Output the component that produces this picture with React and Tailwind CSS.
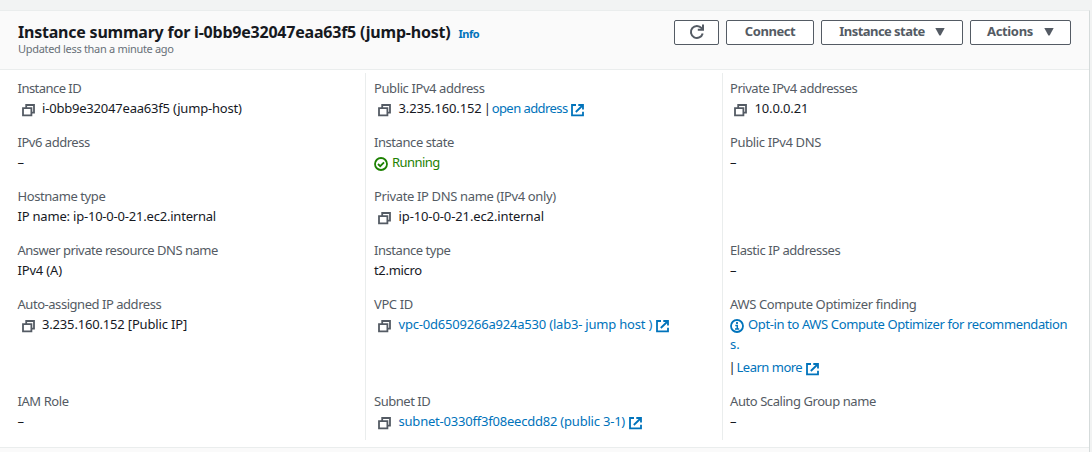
const CopyIcon = () => (
  <svg className="ml-1 mr-[7.5px] mt-[6px] h-[13px] w-[13px] shrink-0" viewBox="0 0 13 13" fill="none" stroke="#545b64" strokeWidth="1.8">
    <path d="M1 4.2h8.4v7.1H1z" />
    <path d="M4.2 4V1H12v7.6H9.7" />
  </svg>
);

const ExternalIcon = () => (
  <svg className="ml-[3.5px] mt-[6px] h-[13px] w-[13px] shrink-0" viewBox="0 0 13 13" fill="none" stroke="#0073bb" strokeWidth="1.8">
    <path d="M5 1H1v10.3h11V7.8" />
    <path d="M7.3 1H12v4.6M11.5 1.5L4.8 8" />
  </svg>
);

const CheckIcon = () => (
  <svg className="mr-1 mt-[5px] h-[14px] w-[14px] shrink-0" viewBox="0 0 14 14" fill="none" stroke="#1d8102" strokeWidth="1.8">
    <circle cx="7" cy="7" r="6" />
    <path d="M4 7l2.2 2.2L10 5.3" />
  </svg>
);

const InfoIcon = () => (
  <svg className="mr-1 mt-[5px] h-[14px] w-[14px] shrink-0" viewBox="0 0 14 14" fill="none" stroke="#0073bb" strokeWidth="1.8">
    <circle cx="7" cy="7" r="6" />
    <path d="M7 3v2" />
    <path d="M5.3 6.5H7.3V10M5 10h4.2" strokeWidth="1.5" />
  </svg>
);

const RefreshIcon = () => (
  <svg className="mt-px h-4 w-4" viewBox="0 0 16 16" fill="none" stroke="#545b64" strokeWidth="2">
    <path d="M13.7 9.5A6 6 0 1 1 12.6 4.2L13.7 5.4" />
    <path d="M14 .5v5.3H8.8" />
  </svg>
);

const Caret = () => (
  <svg className="mt-px h-2 w-[10px]" viewBox="0 0 10 8" fill="#545b64">
    <path d="M.3 0h9.4L5.6 7.6H4.4z" />
  </svg>
);

const Button = ({ className, children }) => (
  <button className={`flex h-[25px] items-center justify-center whitespace-nowrap rounded-[2px] border border-[#545b64] bg-white pb-[3px] font-bold text-[#545b64] ${className}`}>
    {children}
  </button>
);

const Field = ({ label, labelClass = "", className = "h-[54px]", children }) => (
  <div className={`shrink-0 ${className}`}>
    <div className="h-5 whitespace-nowrap text-[#545b64]"><span className={labelClass}>{label}</span></div>
    <div className="flex h-5 whitespace-pre">{children}</div>
  </div>
);

const Column = ({ className, children }) => (
  <div className={`flex h-[367px] flex-col pt-[5px] ${className}`}>{children}</div>
);

const Link = ({ className = "", children }) => <a className={`text-[#0073bb] ${className}`}>{children}</a>;

export default function App() {
  return (
    <div className="h-[452px] w-[1092px] overflow-hidden bg-[#f2f3f3] pt-[10px] font-['Noto_Sans',sans-serif] text-[13px] leading-5 text-[#16191f]">
      <div className="h-[442px] w-[1090px] border-r border-t border-[#d5dbdb] border-t-[#eaeded] bg-[#fafafa]">
        <header className="flex h-[59px] justify-between border-b border-[#eaeded] bg-[#fafafa] px-[18px] pt-[9px]">
          <div>
            <div className="flex h-[22px] items-baseline whitespace-nowrap">
              <h1 className="text-base font-bold leading-6 tracking-[-0.22px]">Instance summary for i-0bb9e32047eaa63f5 (jump-host)</h1>
              <a className="ml-2 text-[11px] font-bold tracking-[-0.42px] text-[#0073bb]">Info</a>
            </div>
            <p className="text-[11px] leading-[14px] tracking-[-0.31px] text-[#687078]">Updated less than a minute ago</p>
          </div>
          <div className="flex gap-[7px]">
            <Button className="w-[45px]"><RefreshIcon /></Button>
            <Button className="w-[88px] tracking-[-0.45px]">Connect</Button>
            <Button className="w-[142px] gap-[10px] tracking-[-0.55px]">Instance state<Caret /></Button>
            <Button className="w-[101px] gap-[11px] tracking-[-0.36px]">Actions<Caret /></Button>
          </div>
        </header>
        <main className="flex h-[378px] border-b border-[#eaeded] bg-white pt-[3px]">
          <Column className="w-[365px] pl-[17.5px]">
            <Field label="Instance ID" labelClass="tracking-[-0.53px]"><CopyIcon /><span className="tracking-[-0.2px]">i-0bb9e32047eaa63f5 (jump-host)</span></Field>
            <Field label="IPv6 address" labelClass="tracking-[-0.47px]">–</Field>
            <Field label="Hostname type" labelClass="tracking-[-0.42px]"><span className="tracking-[-0.205px]">IP name: ip-10-0-0-21.ec2.internal</span></Field>
            <Field label="Answer private resource DNS name" labelClass="tracking-[-0.497px]"><span className="tracking-[-0.17px]">IPv4 (A)</span></Field>
            <Field label="Auto-assigned IP address" labelClass="tracking-[-0.46px]" className="h-[97px]"><CopyIcon /><span className="tracking-[-0.17px]">3.235.160.152 [Public IP]</span></Field>
            <Field label="IAM Role" labelClass="tracking-[-0.42px]">–</Field>
          </Column>
          <Column className="w-[357px] border-l border-[#eaeded] pl-2">
            <Field label="Public IPv4 address" labelClass="tracking-[-0.4px]"><CopyIcon /><span className="tracking-[-0.13px]">3.235.160.152</span><span className="w-[10px] tracking-[-1.3px]"> | </span><Link className="tracking-[-0.56px]">open address</Link><ExternalIcon /></Field>
            <Field label="Instance state" labelClass="tracking-[-0.435px]"><CheckIcon /><span className="tracking-[-0.54px] text-[#1d8102]">Running</span></Field>
            <Field label="Private IP DNS name (IPv4 only)" labelClass="tracking-[-0.36px]"><CopyIcon /><span className="tracking-[-0.11px]">ip-10-0-0-21.ec2.internal</span></Field>
            <Field label="Instance type" labelClass="tracking-[-0.45px]"><span className="tracking-[-0.32px]">t2.micro</span></Field>
            <Field label="VPC ID" labelClass="tracking-[-0.4px]" className="h-[97px]"><CopyIcon /><Link className="tracking-[-0.2px]">vpc-0d6509266a924a530 (lab3- jump host )</Link><ExternalIcon /></Field>
            <Field label="Subnet ID" labelClass="tracking-[-0.47px]"><CopyIcon /><Link className="tracking-[-0.21px]">subnet-0330ff3f08eecdd82 (public 3-1)</Link><ExternalIcon /></Field>
          </Column>
          <Column className="w-[366px] border-l border-[#eaeded] pl-[7px]">
            <Field label="Private IPv4 addresses" labelClass="tracking-[-0.46px]"><CopyIcon /><span className="tracking-[-0.15px]">10.0.0.21</span></Field>
            <Field label="Public IPv4 DNS" labelClass="tracking-[-0.36px]" className="h-[108px]">–</Field>
            <Field label="Elastic IP addresses" labelClass="tracking-[-0.45px]">–</Field>
            <div className="h-[97px] shrink-0 whitespace-pre">
              <div className="h-5 tracking-[-0.37px] text-[#545b64]">AWS Compute Optimizer finding</div>
              <div className="flex h-5"><InfoIcon /><Link className="tracking-[-0.38px]">Opt-in to AWS Compute Optimizer for recommendation</Link></div>
              <div className="h-[23px]"><Link>s.</Link></div>
              <div className="flex h-5"><span className="-ml-[1.5px] w-[8px]">|</span><Link className="tracking-[-0.5px]">Learn more</Link><ExternalIcon /></div>
            </div>
            <Field label="Auto Scaling Group name" labelClass="tracking-[-0.43px]">–</Field>
          </Column>
        </main>
      </div>
    </div>
  );
}
